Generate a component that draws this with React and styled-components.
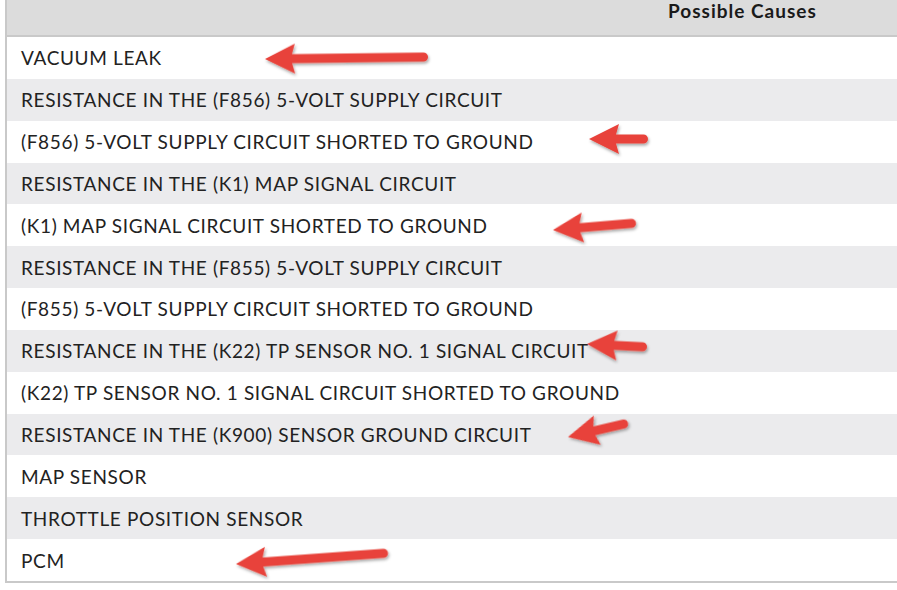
import React from 'react';
import styled, { createGlobalStyle } from 'styled-components';

const GlobalStyle = createGlobalStyle`
  html, body {
    margin: 0;
    padding: 0;
    background: #ffffff;
    overflow: hidden;
  }
`;

const Page = styled.div`
  position: relative;
  width: 897px;
  height: 590px;
  padding-left: 5px;
  box-sizing: border-box;
  overflow: hidden;
  font-family: Lato, 'Open Sans', sans-serif;
`;

const Table = styled.div`
  width: 940px;
  border-left: 2px solid #c9c9c9;
  border-bottom: 2px solid #c9c9c9;
`;

const HeaderRow = styled.div`
  height: 37px;
  background: #dcdcdc;
  border-bottom: 2px solid #c9c9c9;
  display: flex;
  box-sizing: border-box;
`;

const HeaderCell = styled.div`
  margin-left: 661px;
  font-size: 19px;
  font-weight: 700;
  letter-spacing: 1px;
  color: #1a1a1a;
  line-height: 22px;
`;

const Row = styled.div`
  height: 41.85px;
  display: flex;
  align-items: center;
  padding-left: 14px;
  background: ${(p) => (p.$shaded ? '#ebebed' : '#ffffff')};
  font-size: 19px;
  letter-spacing: 0.65px;
  color: #222222;
`;

const ArrowLayer = styled.svg`
  position: absolute;
  left: 0;
  top: 0;
  pointer-events: none;
`;

const causes = [
  'VACUUM LEAK',
  'RESISTANCE IN THE (F856) 5-VOLT SUPPLY CIRCUIT',
  '(F856) 5-VOLT SUPPLY CIRCUIT SHORTED TO GROUND',
  'RESISTANCE IN THE (K1) MAP SIGNAL CIRCUIT',
  '(K1) MAP SIGNAL CIRCUIT SHORTED TO GROUND',
  'RESISTANCE IN THE (F855) 5-VOLT SUPPLY CIRCUIT',
  '(F855) 5-VOLT SUPPLY CIRCUIT SHORTED TO GROUND',
  'RESISTANCE IN THE (K22) TP SENSOR NO. 1 SIGNAL CIRCUIT',
  '(K22) TP SENSOR NO. 1 SIGNAL CIRCUIT SHORTED TO GROUND',
  'RESISTANCE IN THE (K900) SENSOR GROUND CIRCUIT',
  'MAP SENSOR',
  'THROTTLE POSITION SENSOR',
  'PCM',
];

// tip -> tail end
const arrows = [
  { tip: [265, 59], tail: [428, 57] },
  { tip: [589, 139], tail: [648, 139] },
  { tip: [553, 230], tail: [636, 223] },
  { tip: [587, 344], tail: [647, 347] },
  { tip: [568, 437], tail: [628, 423] },
  { tip: [236, 564], tail: [388, 553] },
];

function Arrow({ tip, tail }) {
  const dx = tail[0] - tip[0];
  const dy = tail[1] - tip[1];
  const len = Math.sqrt(dx * dx + dy * dy);
  const angle = (Math.atan2(dy, dx) * 180) / Math.PI;
  const d = `M0,0 L30,-15 L27,-4.5 L${len - 4.5},-4.5 A4.5,4.5 0 0 1 ${len - 4.5},4.5 L27,4.5 L30,15 Z`;
  return (
    <path
      d={d}
      fill="#e8433b"
      filter="url(#shadow)"
      transform={`translate(${tip[0]} ${tip[1]}) rotate(${angle})`}
    />
  );
}

export default function App() {
  return (
    <Page>
      <GlobalStyle />
      <Table>
        <HeaderRow>
          <HeaderCell>Possible Causes</HeaderCell>
        </HeaderRow>
        {causes.map((c, i) => (
          <Row key={c} $shaded={i % 2 === 1}>
            {c}
          </Row>
        ))}
      </Table>
      <ArrowLayer width="897" height="590" viewBox="0 0 897 590">
        <defs>
          <filter id="shadow" x="-20%" y="-50%" width="140%" height="200%">
            <feDropShadow dx="1" dy="2" stdDeviation="1.6" floodColor="#000" floodOpacity="0.35" />
          </filter>
        </defs>
        {arrows.map((a, i) => (
          <Arrow key={i} tip={a.tip} tail={a.tail} />
        ))}
      </ArrowLayer>
    </Page>
  );
}
